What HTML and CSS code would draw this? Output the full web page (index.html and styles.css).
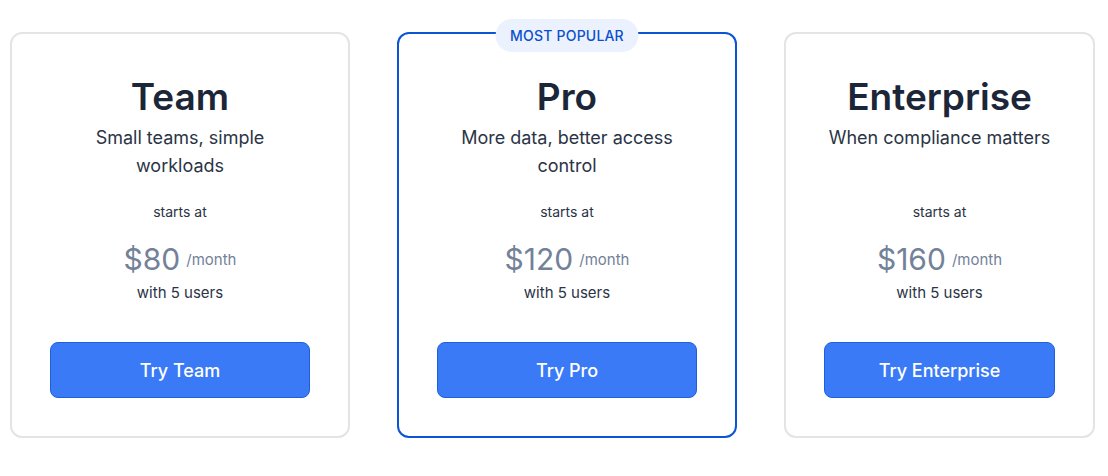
FILE: index.html
```html
<!DOCTYPE html>
<html>
<head>
<meta charset="utf-8">
<link rel="stylesheet" href="styles.css">
</head>
<body>
<div class="plans">
  <div class="card">
    <h2 class="title">Team</h2>
    <p class="desc">Small teams, simple workloads</p>
    <p class="starts">starts at</p>
    <p class="price"><span class="amount">$80</span><span class="per">/month</span></p>
    <p class="users">with 5 users</p>
    <a class="btn">Try Team</a>
  </div>
  <div class="card popular">
    <span class="badge">MOST POPULAR</span>
    <h2 class="title">Pro</h2>
    <p class="desc">More data, better access control</p>
    <p class="starts">starts at</p>
    <p class="price"><span class="amount">$120</span><span class="per">/month</span></p>
    <p class="users">with 5 users</p>
    <a class="btn">Try Pro</a>
  </div>
  <div class="card narrow">
    <h2 class="title">Enterprise</h2>
    <p class="desc">When compliance matters</p>
    <p class="starts">starts at</p>
    <p class="price"><span class="amount">$160</span><span class="per">/month</span></p>
    <p class="users">with 5 users</p>
    <a class="btn">Try Enterprise</a>
  </div>
</div>
</body>
</html>
```
FILE: styles.css
```css
* { box-sizing: border-box; }
body {
  margin: 0;
  background: #ffffff;
  font-family: Inter, "Noto Sans", sans-serif;
  color: #1e293b;
}
.plans {
  display: flex;
  gap: 47px;
  padding: 32px 0 0 10px;
}
.card {
  position: relative;
  width: 340px;
  height: 406px;
  border: 2px solid #e3e4e6;
  border-radius: 12px;
  padding: 39px 38px 0;
  display: flex;
  flex-direction: column;
  align-items: center;
  text-align: center;
}
.card.narrow { width: 311px; }
.card.popular { border-color: #0b54d4; }
.badge {
  position: absolute;
  top: -15px;
  left: 50%;
  transform: translateX(-50%);
  width: 143px;
  height: 33px;
  line-height: 33px;
  border-radius: 17px;
  background: #ebf2fd;
  color: #0b4fcf;
  font-size: 14px;
  font-weight: 500;
  letter-spacing: 0.2px;
}
.title {
  margin: 0;
  font-size: 37px;
  line-height: 48px;
  font-weight: 600;
  color: #1b2638;
}
.desc {
  margin: 3px 0 0;
  font-size: 18px;
  line-height: 28px;
  height: 56px;
  color: #2b3445;
}
.starts {
  margin: 22px 0 0;
  font-size: 14px;
  line-height: 20px;
  color: #2b3445;
}
.price {
  margin: 17px 0 0;
  height: 40px;
  line-height: 40px;
  display: flex;
  align-items: center;
  gap: 6px;
  color: #738199;
}
.amount { font-size: 30px; font-weight: 400; line-height: 40px; }
.per { font-size: 15px; line-height: 20px; padding-top: 1px; }
.users {
  margin: 3px 0 0;
  font-size: 15px;
  line-height: 22px;
  color: #2b3445;
}
.btn {
  margin-top: 38px;
  width: 100%;
  height: 56px;
  display: flex;
  align-items: center;
  justify-content: center;
  background: #3a7af6;
  border: 1px solid #1d60dc;
  border-radius: 8px;
  color: #ffffff;
  font-size: 18px;
  font-weight: 500;
}
```
